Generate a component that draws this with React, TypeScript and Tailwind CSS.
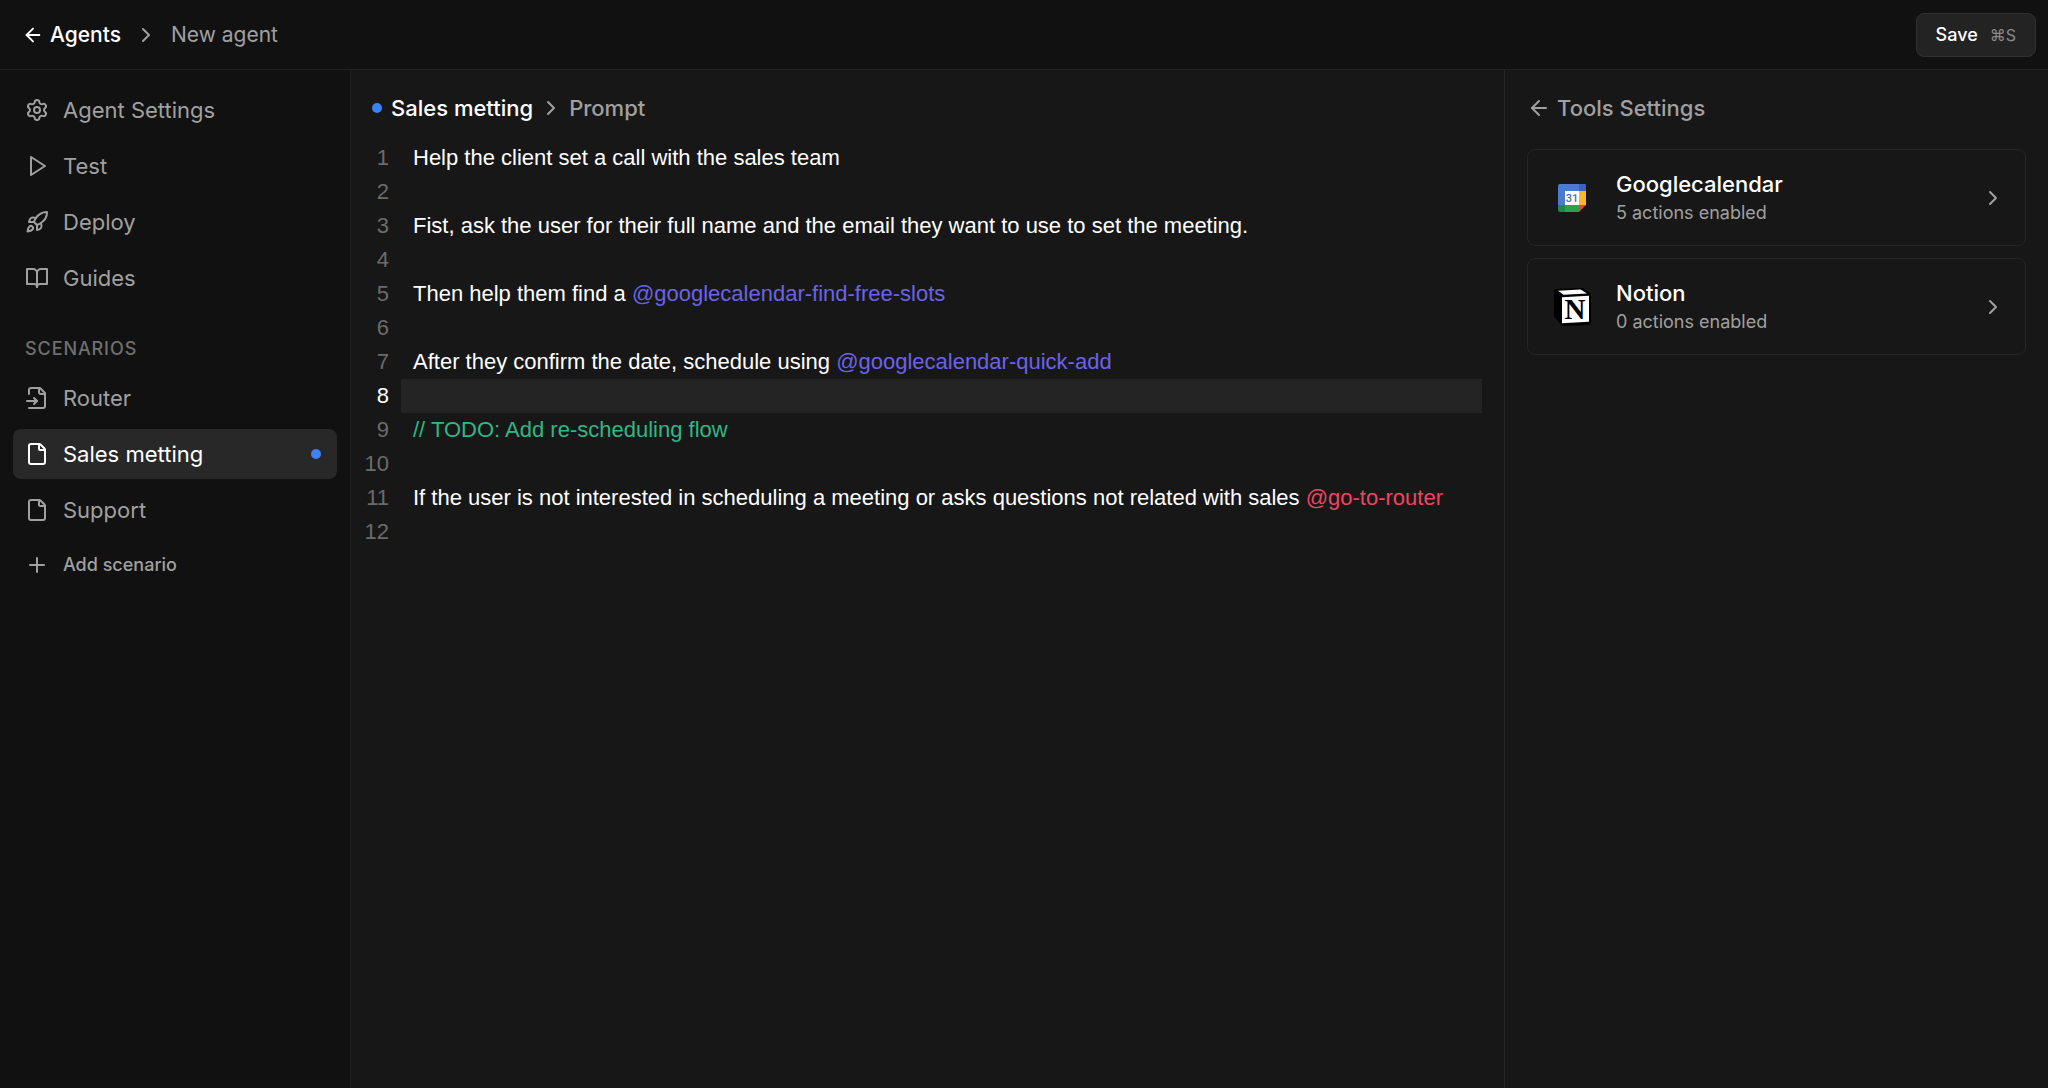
import type { ComponentType } from "react";
import { ArrowLeft, ChevronRight, File, Plus, Rocket, Settings } from "lucide-react";

type IconType = ComponentType<{ className?: string }>;

const iconProps = {
  viewBox: "0 0 24 24",
  fill: "none",
  stroke: "currentColor",
  strokeWidth: 2,
  strokeLinecap: "round",
  strokeLinejoin: "round",
  "aria-hidden": true,
} as const;

const PlayIcon: IconType = ({ className }) => (
  <svg {...iconProps} className={className}>
    <path d="M6 3l14 9-14 9V3z" />
  </svg>
);

const BookIcon: IconType = ({ className }) => (
  <svg {...iconProps} className={className}>
    <path d="M2 3h6a4 4 0 0 1 4 4v14a3 3 0 0 0-3-3H2z" />
    <path d="M22 3h-6a4 4 0 0 0-4 4v14a3 3 0 0 1 3-3h7z" />
  </svg>
);

const RouterIcon: IconType = ({ className }) => (
  <svg {...iconProps} className={className}>
    <path d="M4 22h14a2 2 0 0 0 2-2V7l-5-5H6a2 2 0 0 0-2 2v4" />
    <path d="M14 2v4a2 2 0 0 0 2 2h4" />
    <path d="M2 15h10" />
    <path d="m9 18 3-3-3-3" />
  </svg>
);

type NavItemProps = {
  icon: IconType;
  label: string;
  active?: boolean;
};

const NavItem = ({ icon: Icon, label, active }: NavItemProps) => {
  return (
    <a
      href="#"
      className={
        active
          ? "flex items-center h-[50px] px-3 gap-[14px] rounded-lg bg-[#282828] text-white"
          : "flex items-center h-[50px] px-3 gap-[14px] rounded-lg text-[#a0a0a0]"
      }
    >
      <Icon className="size-6" />
      <span className="flex-grow">{label}</span>
      {active && <span className="size-[10px] mr-1 rounded-full bg-[#3b82f6]" />}
    </a>
  );
};

const GoogleCalendarLogo = () => {
  return (
    <svg viewBox="0 0 28 28" className="size-7" aria-hidden="true">
      <path d="M2 0h24a2 2 0 0 1 2 2v5h-7v14H0V2a2 2 0 0 1 2-2z" fill="#4a7bd0" />
      <path d="M21 0h5a2 2 0 0 1 2 2v5h-7z" fill="#3a66b8" />
      <path d="M21 7h7v14h-7z" fill="#fbb823" />
      <path d="M7 21h14v7H7z" fill="#2f9e4d" />
      <path d="M0 21h7v7H2a2 2 0 0 1-2-2z" fill="#23854a" />
      <path d="M21 21h7l-7 7z" fill="#e24534" />
      <path d="M7 7h14v14H7z" fill="#fff" />
      <text
        x="14"
        y="18"
        textAnchor="middle"
        fontFamily="Roboto, sans-serif"
        fontSize="11"
        fontWeight="500"
        fill="#3f72c8"
      >
        31
      </text>
    </svg>
  );
};

const NotionLogo = () => {
  return (
    <svg viewBox="0 0 37 38" className="w-[37px] h-[38px]" aria-hidden="true">
      <path
        d="M3 1 28 0a3 3 0 0 1 2 .5l6 4.500a2.500 2.500 0 0 1 1 2V34a3 3 0 0 1-3 3L10 38a4 4 0 0 1-3.500-1.500L1 29.500A4 4 0 0 1 0 27V4a3 3 0 0 1 3-3z"
        fill="#000"
      />
      <path d="M4 2.700 26.500 1.500 33 5.500 9.500 6.800 4 2.700z" fill="#fff" />
      <path d="M8 9.300 35 7.800v26L8 35.300z" fill="#fff" />
      <text
        x="21"
        y="31"
        textAnchor="middle"
        fontFamily="Liberation Serif, serif"
        fontSize="29"
        fontWeight="700"
        fill="#000"
      >
        N
      </text>
    </svg>
  );
};

type ToolCardProps = {
  logo: ComponentType;
  name: string;
  actions: number;
};

const ToolCard = ({ logo: Logo, name, actions }: ToolCardProps) => {
  return (
    <button className="flex items-center w-full h-[97px] px-5 rounded-lg border border-[#262626] text-left cursor-pointer">
      <span className="flex items-center justify-center w-12">
        <Logo />
      </span>
      <span className="flex flex-col flex-grow gap-px ml-5 pt-[2px]">
        <span className="font-medium text-white">{name}</span>
        <span className="text-lg leading-7">{actions} actions enabled</span>
      </span>
      <ChevronRight className="size-6" />
    </button>
  );
};

type Line = {
  text: string;
  mention?: string;
  color?: string;
};

const lines: Line[] = [
  { text: "Help the client set a call with the sales team" },
  { text: "" },
  { text: "Fist, ask the user for their full name and the email they want to use to set the meeting." },
  { text: "" },
  { text: "Then help them find a ", mention: "@googlecalendar-find-free-slots", color: "text-[#6a63e8]" },
  { text: "" },
  { text: "After they confirm the date, schedule using ", mention: "@googlecalendar-quick-add", color: "text-[#6a63e8]" },
  { text: "" },
  { text: "", mention: "// TODO: Add re-scheduling flow", color: "text-[#2eb886]" },
  { text: "" },
  {
    text: "If the user is not interested in scheduling a meeting or asks questions not related with sales ",
    mention: "@go-to-router",
    color: "text-[#ef4460]",
  },
  { text: "" },
];

const ACTIVE_LINE = 8;

const Editor = () => {
  return (
    <div className="flex pr-[22px] font-['Liberation_Sans',Arial,sans-serif] leading-[34px]">
      <div className="w-[38px] shrink-0 text-right text-[#6b6b6b]">
        {lines.map((_, i) => (
          <div key={i} className={i + 1 === ACTIVE_LINE ? "text-white" : ""}>
            {i + 1}
          </div>
        ))}
      </div>
      <div
        className="flex-grow min-w-0 ml-3 text-white outline-none"
        role="textbox"
        aria-label="Prompt"
        aria-multiline="true"
        contentEditable
        suppressContentEditableWarning
        spellCheck={false}
      >
        {lines.map((line, i) => (
          <div
            key={i}
            className={
              i + 1 === ACTIVE_LINE ? "min-h-[34px] px-3 bg-[#242424]" : "min-h-[34px] px-3"
            }
          >
            {line.text}
            {line.mention && <span className={line.color}>{line.mention}</span>}
          </div>
        ))}
      </div>
    </div>
  );
};

const App = () => {
  return (
    <div className="flex flex-col min-h-screen bg-[#111111] font-[Inter,sans-serif] text-[22px] leading-7 text-[#a0a0a0]">
      <header className="flex items-center justify-between h-[70px] pl-[22px] pr-3 border-b border-[#222222]">
        <nav className="flex items-center text-[21px]">
          <a href="#" className="flex items-center gap-[6px] font-medium text-white">
            <ArrowLeft className="size-[22px]" />
            Agents
          </a>
          <ChevronRight className="size-6 mx-[13px]" />
          <span>New agent</span>
        </nav>
        <button className="flex items-center gap-3 h-11 px-[19px] rounded-lg border border-[#303030] bg-[#232323] text-lg font-medium text-white cursor-pointer">
          Save
          <kbd className="font-[Inter,'DejaVu_Sans',sans-serif] text-base font-normal text-[#8a8a8a]">⌘S</kbd>
        </button>
      </header>
      <div className="flex flex-grow">
        <aside className="flex flex-col gap-[6px] w-[351px] shrink-0 px-[13px] pt-[15px] border-r border-[#1e1e1e]">
          <NavItem icon={Settings} label="Agent Settings" />
          <NavItem icon={PlayIcon} label="Test" />
          <NavItem icon={Rocket} label="Deploy" />
          <NavItem icon={BookIcon} label="Guides" />
          <h2 className="px-3 pt-[26px] pb-1 text-lg font-medium tracking-wider text-[#6f6f6f]">
            SCENARIOS
          </h2>
          <NavItem icon={RouterIcon} label="Router" />
          <NavItem icon={File} label="Sales metting" active />
          <NavItem icon={File} label="Support" />
          <button className="flex items-center h-12 px-3 gap-[14px] text-lg font-medium cursor-pointer">
            <Plus className="size-6" />
            Add scenario
          </button>
        </aside>
        <main className="flex-grow min-w-0 bg-[#171717]">
          <div className="flex items-center h-[71px] pl-[21px] pt-1">
            <span className="size-[10px] mr-[9px] rounded-full bg-[#3b82f6]" />
            <h1 className="font-medium text-white">Sales metting</h1>
            <ChevronRight className="size-6 mx-[6px]" />
            <span className="font-medium">Prompt</span>
          </div>
          <Editor />
        </main>
        <section className="w-[544px] shrink-0 px-[22px] bg-[#171717] border-l border-[#262626]">
          <a href="#" className="flex items-center gap-[6px] h-[71px] pt-1 font-medium">
            <ArrowLeft className="size-6" />
            Tools Settings
          </a>
          <div className="flex flex-col gap-3 pt-2">
            <ToolCard logo={GoogleCalendarLogo} name="Googlecalendar" actions={5} />
            <ToolCard logo={NotionLogo} name="Notion" actions={0} />
          </div>
        </section>
      </div>
    </div>
  );
};

export default App;
